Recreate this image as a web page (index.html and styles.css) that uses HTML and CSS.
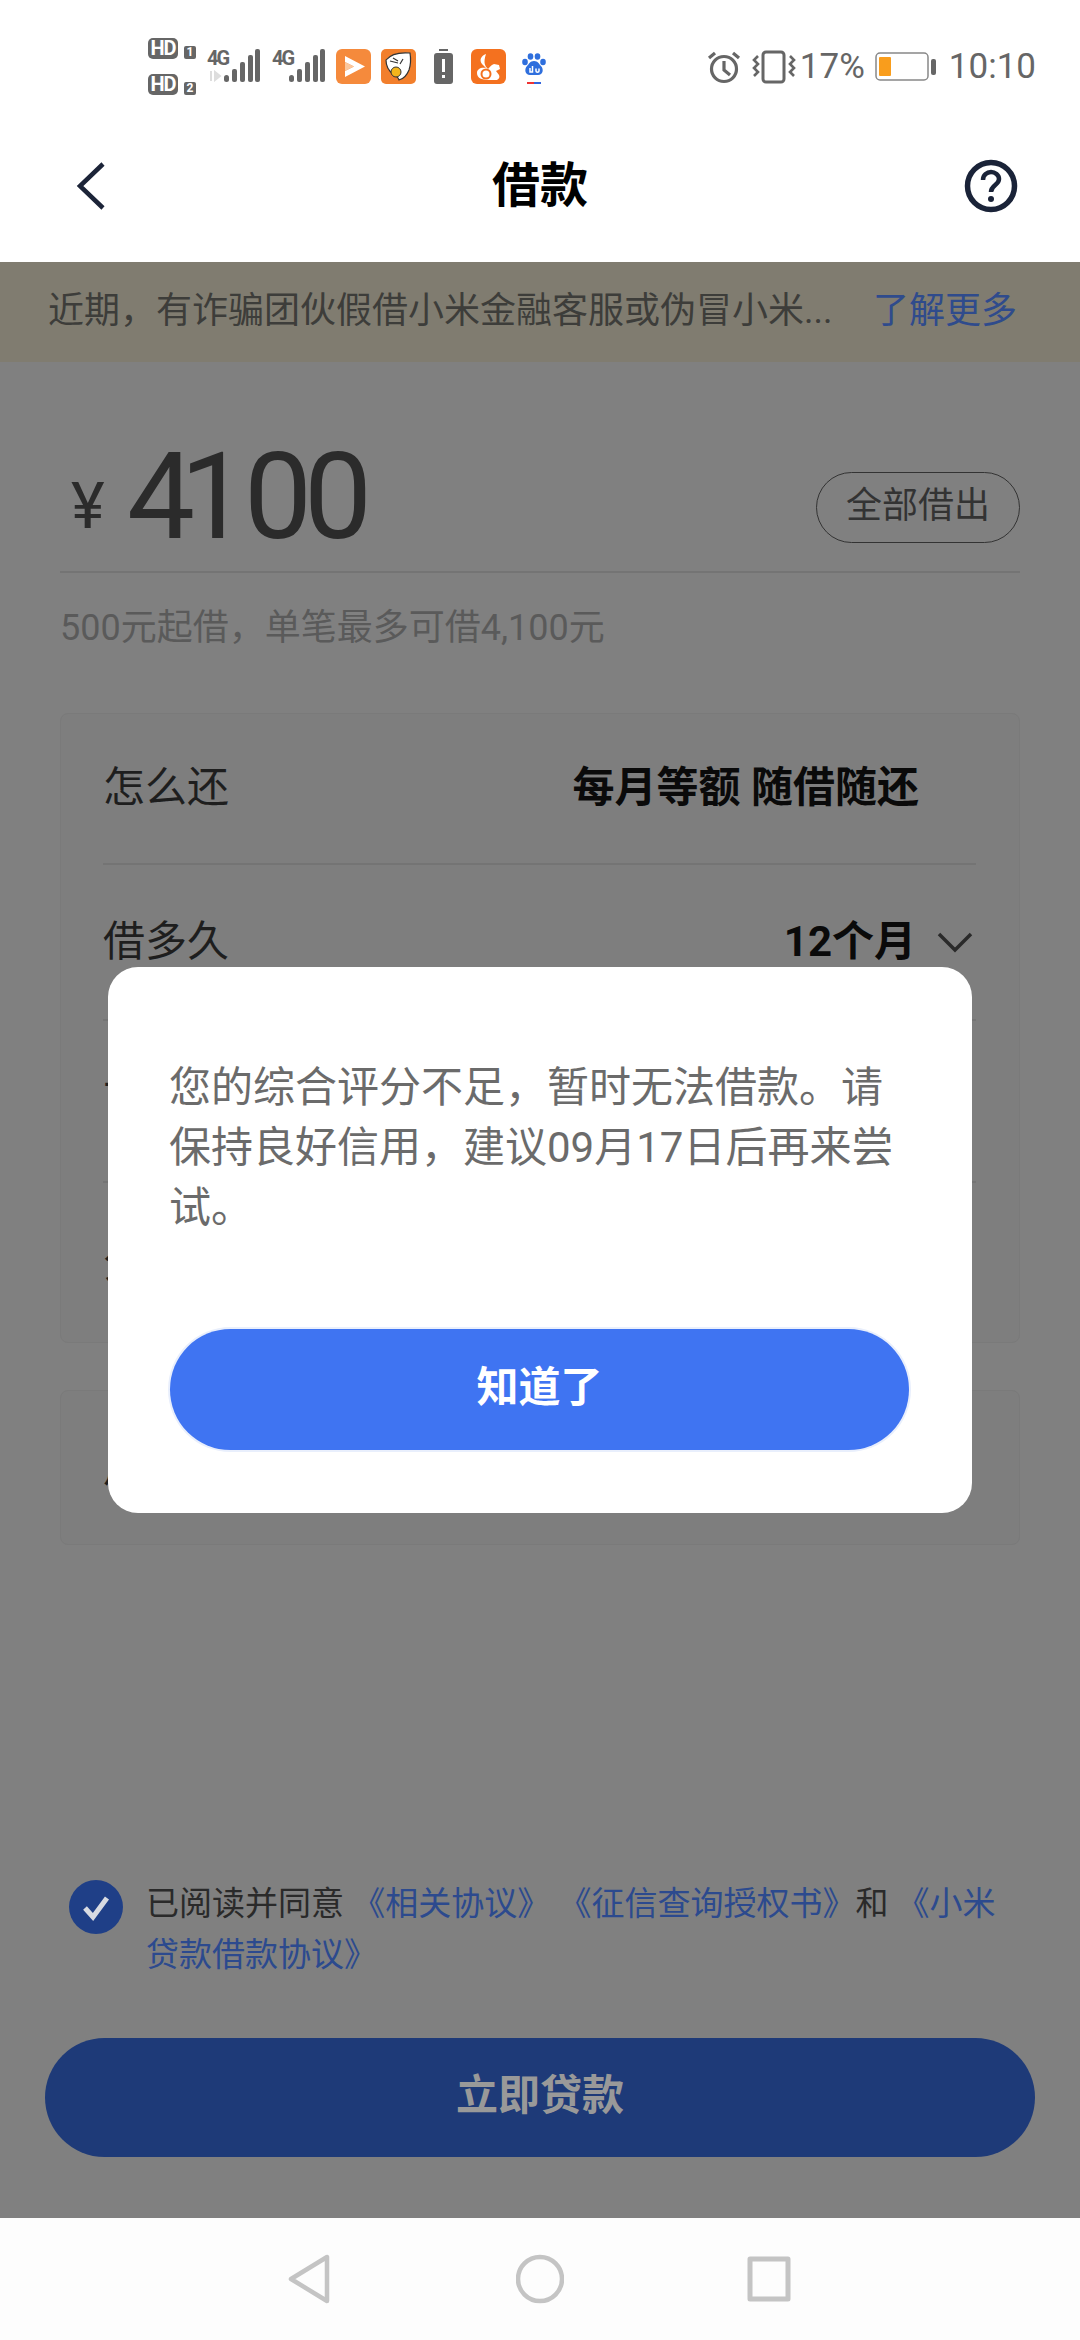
FILE: index.html
```html
<!DOCTYPE html>
<html lang="zh">
<head>
<meta charset="utf-8">
<title>借款</title>
<link rel="stylesheet" href="styles.css">
</head>
<body>
<div class="screen">
  <header class="status">
    <div class="hd-col">
      <div class="hd-line"><span class="hd">HD</span><span class="sim">1</span></div>
      <div class="hd-line"><span class="hd">HD</span><span class="sim">2</span></div>
    </div>
    <div class="signal">
      <span class="net">4G</span>
      <svg class="bars" width="36" height="33" viewBox="0 0 36 33"><g fill="#666"><rect x="0" y="26" width="5" height="7" rx="2.5"/><rect x="8" y="20" width="5" height="13" rx="2"/><rect x="16" y="13" width="5" height="20" rx="2"/><rect x="24" y="6" width="5" height="27" rx="2"/><rect x="31" y="0" width="5" height="33" rx="2"/></g></svg>
      <svg class="updown" width="14" height="12" viewBox="0 0 14 12"><path d="M3 1v10M7 2v8l5-4z" stroke="#ddd" stroke-width="2" fill="#ddd"/></svg>
    </div>
    <div class="signal sig2">
      <span class="net">4G</span>
      <svg class="bars" width="36" height="33" viewBox="0 0 36 33"><g fill="#666"><rect x="0" y="26" width="5" height="7" rx="2.5"/><rect x="8" y="20" width="5" height="13" rx="2"/><rect x="16" y="13" width="5" height="20" rx="2"/><rect x="24" y="6" width="5" height="27" rx="2"/><rect x="31" y="0" width="5" height="33" rx="2"/></g></svg>
    </div>
    <svg class="app app-first" width="35" height="35" viewBox="0 0 35 35"><rect width="35" height="35" rx="6" fill="#f58a3c"/><path d="M9 7l20 10.500L9 28v-6l9-4.500-9-4.500z" fill="#fff"/><path d="M9 13l9 4.500-9 4.500z" fill="#fbc79c"/></svg>
    <svg class="app" width="35" height="35" viewBox="0 0 35 35"><rect width="35" height="35" rx="5" fill="#f27f2c"/><path d="M5 11C9 6 17 3 29 4c1 6 1 11-1 17-2 5-6 9-10 10-1-3-4-5-6-6-4-3-7-8-7-14z" fill="#fff" stroke="#333" stroke-width="1.200"/><path d="M9 12l8 2M12 9l5 3M22 10l-3 5" stroke="#333" stroke-width="1.200" fill="none"/><circle cx="15" cy="23" r="5" fill="#f3b51c" stroke="#333" stroke-width="1"/></svg>
    <svg class="app app-batt" width="19" height="35" viewBox="0 0 19 35"><rect x="5" y="0" width="9" height="2" fill="#666"/><rect x="0" y="4" width="19" height="31" rx="3" fill="#666"/><rect x="8" y="10" width="3" height="13" fill="#fff"/><rect x="8" y="26" width="3" height="3" fill="#fff"/></svg>
    <svg class="app app-uc" width="35" height="35" viewBox="0 0 35 35"><rect width="35" height="35" rx="6" fill="#f4711f"/><path d="M15 5c-5 2-7 6-4 10l4 4c-5-1-9 1-9 5 0 5 5 7 11 7h9c2-1 3-3 2-5l-3-4 4-2-1-4-5-1c-3 1-5 4-6 5-3-3-5-6-2-15z" fill="#fff"/><circle cx="15" cy="25" r="4.500" fill="none" stroke="#f4711f" stroke-width="2"/></svg>
    <svg class="app app-baidu" width="24" height="31" viewBox="0 0 24 31"><g fill="#2f6fdd"><ellipse cx="3" cy="9" rx="2.800" ry="3.200"/><ellipse cx="8.500" cy="3.500" rx="2.800" ry="3.300"/><ellipse cx="15.500" cy="3.500" rx="2.800" ry="3.300"/><ellipse cx="21" cy="9" rx="2.800" ry="3.200"/><path d="M12 8c4 0 5 3 7 5 3 3 2 9-3 9H8c-5 0-6-6-3-9 2-2 3-5 7-5z"/></g><rect x="5" y="29" width="7" height="2" fill="#e33"/><rect x="12" y="29" width="7" height="2" fill="#36d"/><path d="M8 15v4h2.500v-6M14 15.500v2.500c0 1.500 3 1.500 3 0v-2.500" stroke="#fff" stroke-width="1.500" fill="none"/></svg>
    <div class="status-right">
      <svg width="34" height="34" viewBox="0 0 34 34" fill="none" stroke="#666" stroke-width="3.200"><circle cx="17" cy="19" r="12.500"/><path d="M17 11v9l6 5"/><path d="M2 8l6-5M32 8l-6-5"/></svg>
      <svg class="vib" width="44" height="34" viewBox="0 0 44 34" fill="none" stroke="#666"><rect x="11" y="2" width="21" height="30" rx="3" stroke-width="3"/><path d="M6 6l-4 4 4 4-4 4 4 4-4 4M38 6l4 4-4 4 4 4-4 4 4 4" stroke-width="2.600"/></svg>
      <span class="pct">17%</span>
      <svg class="batt" width="62" height="30" viewBox="0 0 62 30"><rect x="1" y="1" width="52" height="27" rx="4" fill="#fff" stroke="#888" stroke-width="1.500"/><rect x="4" y="5" width="12" height="19" rx="1" fill="#f99d1c"/><rect x="56" y="7" width="5" height="16" rx="2" fill="#666"/></svg>
      <span class="time">10:10</span>
    </div>
  </header>

  <nav class="navbar">
    <svg width="30" height="48" viewBox="0 0 30 48" fill="none" stroke="#1c2438" stroke-width="4.500"><path d="M27 2L4 24l23 22"/></svg>
    <h1 class="title">借款</h1>
    <svg width="54" height="54" viewBox="0 0 54 54" fill="none" stroke="#1a2338" stroke-width="5.500"><circle cx="27" cy="27" r="23.500"/><path d="M19 21c0-5 4-8 8-8s8 3 8 7c0 6-8 6-8 13" stroke-width="4.500"/><circle cx="27" cy="40" r="3" fill="#1a2338" stroke="none"/></svg>
  </nav>

  <main class="main">
    <div class="notice">
      <span class="notice-text">近期，有诈骗团伙假借小米金融客服或伪冒小米...</span>
      <span class="notice-link">了解更多</span>
    </div>

    <section class="content">
      <div class="amount-row">
        <div class="amount"><span class="yen">¥</span><span class="num"><span class="d4">4</span><span class="d1">1</span>00</span></div>
        <div class="all-btn">全部借出</div>
      </div>
      <p class="hint">500元起借，单笔最多可借4,100元</p>

      <div class="card">
        <div class="row row-a"><span class="label">怎么还</span><span class="value value-a">每月等额 随借随还</span></div>
        <div class="row row-b"><span class="label">借多久</span><span class="value">12个月<svg class="chev" width="36" height="22" viewBox="0 0 36 22" fill="none" stroke="#2a2a2a" stroke-width="3.500"><path d="M2 3l16 16L34 3"/></svg></span></div>
        <div class="row row-c"><span class="label">下期还</span></div>
        <div class="row row-d"><span class="label">分期</span></div>
      </div>

      <div class="card card-2">
        <div class="row row-e"><span class="label">用途</span></div>
      </div>

      <div class="spacer"></div>

      <div class="agree">
        <svg class="check" width="54" height="54" viewBox="0 0 54 54"><circle cx="27" cy="27" r="27" fill="#1f3f87"/><path d="M16 28l8 9 14-19" fill="none" stroke="#d8dbe2" stroke-width="5"/></svg>
        <p class="agree-text">已阅读并同意 <a>《相关协议》</a> <a>《征信查询授权书》</a>和 <a>《小米</a><a>贷款借款协议》</a></p>
      </div>
      <div class="submit">立即贷款</div>
    </section>
  </main>

  <footer class="sysnav">
    <svg width="42" height="50" viewBox="0 0 42 50" fill="none" stroke="#c4c4c4" stroke-width="4.500" stroke-linejoin="round"><path d="M39 3v44L3 25z"/></svg>
    <svg width="48" height="50" viewBox="0 0 48 50" fill="none" stroke="#c4c4c4" stroke-width="4.500"><circle cx="24" cy="25" r="22"/></svg>
    <svg class="sys-square" width="44" height="46" viewBox="0 0 44 46" fill="none" stroke="#c4c4c4" stroke-width="5" stroke-linejoin="round"><rect x="3" y="3" width="38" height="40"/></svg>
  </footer>

  <div class="dialog" role="dialog">
    <p class="dialog-text">您的综合评分不足，暂时无法借款。请保持良好信用，建议09月17日后再来尝试。</p>
    <div class="dialog-btn">知道了</div>
  </div>
</div>
</body>
</html>
```
FILE: styles.css
```css
* { box-sizing: border-box; }
html, body { margin: 0; padding: 0; }
body { font-family: Roboto, "Noto Sans CJK SC", sans-serif; background: #fff; }
p, h1 { margin: 0; }

.screen { position: relative; width: 1080px; height: 2340px; overflow: hidden; display: flex; flex-direction: column; background: #fff; }

/* status bar */
.status { height: 90px; flex: none; display: flex; align-items: flex-start; padding: 38px 44px 0 148px; color: #666; }
.hd-col { display: flex; flex-direction: column; gap: 15px; width: 55px; flex: none; }
.hd-line { display: flex; align-items: flex-end; gap: 6px; height: 21px; }
.hd { width: 30px; height: 21px; border-radius: 5px; background: #666; color: #fff; font: 700 20px/21px Roboto, sans-serif; text-align: center; letter-spacing: -1px; }
.sim { width: 12px; height: 13px; border-radius: 2px; background: #666; color: #fff; font: 700 12px/13px Roboto, sans-serif; text-align: center; }
.signal { position: relative; margin-left: 4px; width: 53px; height: 46px; flex: none; }
.sig2 { margin-left: 12px; }
.net { position: absolute; left: 0; top: 10px; font: 700 20px/20px Roboto, sans-serif; color: #666; letter-spacing: -2px; }
.bars { position: absolute; right: 0; top: 11px; }
.updown { position: absolute; left: 1px; top: 32px; }
.app { flex: none; margin-top: 11px; margin-left: 10px; }
.app-first { margin-left: 11px; }
.app-batt { margin-left: 18px; }
.app-uc { margin-left: 18px; }
.app-baidu { margin-left: 16px; margin-top: 15px; }
.status-right { margin-left: auto; display: flex; align-items: center; height: 36px; margin-top: 11px; flex: none; }
.vib { margin-left: 11px; }
.pct { font-size: 35px; line-height: 36px; color: #666; margin-left: 4px; }
.batt { margin-left: 10px; }
.time { font-size: 35px; line-height: 36px; color: #666; margin-left: 12px; }

/* nav bar */
.navbar { height: 172px; flex: none; display: flex; align-items: center; justify-content: space-between; padding: 20px 62px 0 76px; position: relative; }
.title { position: absolute; left: 0; right: 0; top: 60px; text-align: center; font-size: 48px; line-height: 72px; font-weight: 700; color: #000; }

/* dimmed main */
.main { flex: 1; background: #808080; display: flex; flex-direction: column; min-height: 0; }
.notice { height: 100px; flex: none; background: #807c70; display: flex; align-items: center; justify-content: space-between; padding: 0 63px 11px 48px; font-size: 36px; }
.notice-text { color: #3d3d3a; }
.notice-link { color: #2f4b8c; }

.content { flex: 1; display: flex; flex-direction: column; padding: 81px 60px 0; min-height: 0; }
.amount-row { height: 130px; flex: none; display: flex; align-items: flex-start; justify-content: space-between; border-bottom: 2px solid #747474; }
.amount { display: flex; align-items: flex-start; padding-left: 11px; color: #2b2b2b; }
.yen { font-size: 64px; line-height: 64px; width: 56px; margin-top: 32px; }
.num { font-size: 121px; line-height: 100px; margin-top: 4px; font-weight: 400; letter-spacing: -8px; }
.d4 { letter-spacing: -15px; }
.d1 { letter-spacing: -4px; }
.all-btn { width: 204px; height: 71px; margin-top: 29px; border: 1.500px solid #333; border-radius: 36px; color: #333; font-size: 36px; line-height: 67px; text-align: center; }
.hint { margin-top: 31px; font-size: 36px; line-height: 48px; color: #5a5a5a; }

.card { margin-top: 61px; height: 630px; flex: none; background: #7e7e7e; border-radius: 8px; border: 1px solid #7a7a7a; padding: 0 43px 0 42px; display: flex; flex-direction: column; }
.card-2 { margin-top: 47px; height: 155px; }
.row { display: flex; align-items: center; justify-content: space-between; }
.row-a { height: 151px; border-bottom: 2px solid #747474; }
.row-b { height: 156px; border-bottom: 2px solid #747474; }
.row-c { height: 163px; border-bottom: 2px solid #747474; }
.row-d { height: 159px; }
.row-e { height: 155px; }
.label { font-size: 42px; line-height: 60px; color: #1e1e1e; }
.value { font-size: 42px; line-height: 60px; font-weight: 700; color: #0a0a0a; display: flex; align-items: center; }
.value-a { margin-right: 57px; }
.chev { margin-left: 21px; margin-right: 3px; }

.spacer { flex: 1; }
.agree { display: flex; gap: 23px; padding-left: 9px; flex: none; padding-right: 24px; }
.check { flex: none; margin-top: 2px; }
.agree-text { font-size: 33px; line-height: 51px; color: #2a2a2a; }
.agree-text a { color: #2c4a8e; }
.submit { flex: none; margin: 58px -15px 61px; height: 119px; border-radius: 60px; background: #1e3a78; color: #999; font-size: 42px; font-weight: 700; line-height: 116px; text-align: center; }

/* system nav */
.sysnav { height: 122px; flex: none; background: #fdfdfd; display: flex; align-items: center; gap: 186px; padding-left: 288px; }
.sys-square { margin-left: -3px; }

/* dialog */
.dialog { position: absolute; left: 108px; top: 967px; width: 864px; height: 546px; background: #fff; border-radius: 30px; padding: 91px 61px 0; }
.dialog-text { font-size: 42px; line-height: 60px; color: #6b6b6b; }
.dialog-btn { position: absolute; left: 62px; top: 362px; width: 739px; height: 121px; border-radius: 61px; background: #3f74f2; box-shadow: 0 0 0 2px #e9effc; color: #fff; font-size: 42px; font-weight: 700; line-height: 118px; text-align: center; }
```
